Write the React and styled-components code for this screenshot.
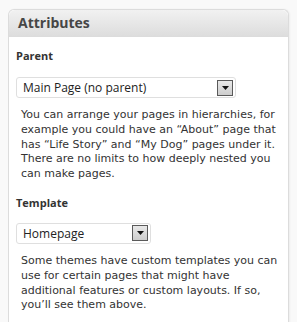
import React from "react";
import styled, { createGlobalStyle } from "styled-components";

const GlobalStyle = createGlobalStyle`
  html, body {
    margin: 0;
    padding: 0;
    background: #f9f9f9;
  }
  body {
    font-family: "DejaVu Sans", "Liberation Sans", sans-serif;
    color: #333;
  }
`;

const Page = styled.div`
  width: 297px;
  height: 322px;
  overflow: hidden;
  padding: 9px 8px 0 8px;
  box-sizing: border-box;
`;

const Panel = styled.div`
  border: 1px solid #dcdcdc;
  border-bottom: none;
  border-radius: 6px 6px 0 0;
  background: #fff;
  min-height: 340px;
  box-shadow: 1px 0 2px rgba(0, 0, 0, 0.05);
`;

const Header = styled.h3`
  margin: 0;
  height: 26px;
  line-height: 26px;
  padding: 0 9px;
  font-family: "Open Sans", "DejaVu Sans", sans-serif;
  font-size: 14px;
  font-weight: bold;
  color: #464646;
  background: linear-gradient(to bottom, #f1f1f1, #dddddd);
  border-radius: 6px 6px 0 0;
  border-bottom: 1px solid #dcdcdc;
`;

const Body = styled.div`
  padding: 12px 7px 0 7px;
`;

const Label = styled.p`
  margin: 0 0 ${(p) => p.$gap}px 0;
  font-family: "Open Sans", "DejaVu Sans", sans-serif;
  font-size: 11px;
  line-height: 13px;
  font-weight: bold;
  color: #333;
`;

const Select = styled.div`
  display: flex;
  align-items: center;
  justify-content: space-between;
  width: ${(p) => p.$width}px;
  height: 21px;
  box-sizing: border-box;
  border: 1px solid #dfdfdf;
  border-radius: 3px;
  padding: 0 2px 0 6px;
  font-family: "Open Sans", "DejaVu Sans", sans-serif;
  font-size: 12px;
  color: #222;
`;

const Arrow = styled.span`
  display: flex;
  align-items: center;
  justify-content: center;
  width: 16px;
  height: 16px;
  box-sizing: border-box;
  border: 1px solid #5a5a5a;
  background: linear-gradient(to bottom, #e8e8e8, #cdcdcd);
`;

const Help = styled.p`
  margin: 10px 0 14px 5px;
  font-size: 11px;
  line-height: 14.8px;
  color: #333;
`;

const Dropdown = ({ value, width }) => (
  <Select $width={width}>
    <span>{value}</span>
    <Arrow>
      <svg width="7" height="4" viewBox="0 0 7 4">
        <path d="M0 0h7L3.5 4z" fill="#111" />
      </svg>
    </Arrow>
  </Select>
);

export default function App() {
  return (
    <>
      <GlobalStyle />
      <Page>
        <Panel>
          <Header>Attributes</Header>
          <Body>
            <Label $gap={15}>Parent</Label>
            <Dropdown value="Main Page (no parent)" width={220} />
            <Help>
              You can arrange your pages in hierarchies, for example you could
              have an “About” page that has “Life Story” and “My Dog” pages
              under it. There are no limits to how deeply nested you can make
              pages.
            </Help>
            <Label $gap={14}>Template</Label>
            <Dropdown value="Homepage" width={135} />
            <Help>
              Some themes have custom templates you can use for certain pages
              that might have additional features or custom layouts. If so,
              you’ll see them above.
            </Help>
          </Body>
        </Panel>
      </Page>
    </>
  );
}
